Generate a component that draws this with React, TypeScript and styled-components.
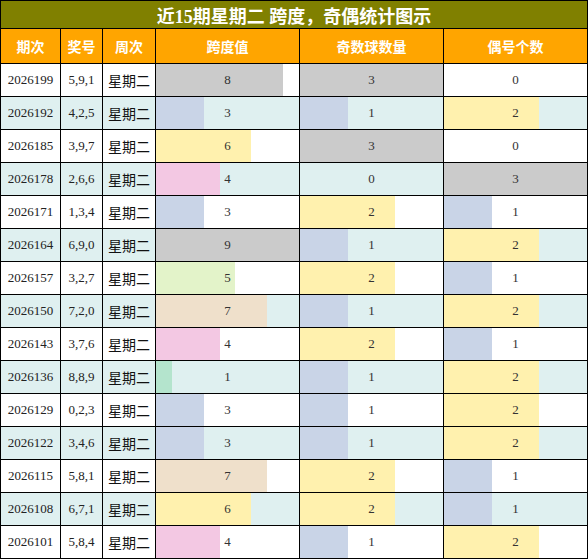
import React from 'react';
import styled, { createGlobalStyle } from 'styled-components';

type Draw = { issue: string; balls: string; span: number; odd: number; even: number };

const draws: Draw[] = [
  { issue: '2026199', balls: '5,9,1', span: 8, odd: 3, even: 0 },
  { issue: '2026192', balls: '4,2,5', span: 3, odd: 1, even: 2 },
  { issue: '2026185', balls: '3,9,7', span: 6, odd: 3, even: 0 },
  { issue: '2026178', balls: '2,6,6', span: 4, odd: 0, even: 3 },
  { issue: '2026171', balls: '1,3,4', span: 3, odd: 2, even: 1 },
  { issue: '2026164', balls: '6,9,0', span: 9, odd: 1, even: 2 },
  { issue: '2026157', balls: '3,2,7', span: 5, odd: 2, even: 1 },
  { issue: '2026150', balls: '7,2,0', span: 7, odd: 1, even: 2 },
  { issue: '2026143', balls: '3,7,6', span: 4, odd: 2, even: 1 },
  { issue: '2026136', balls: '8,8,9', span: 1, odd: 1, even: 2 },
  { issue: '2026129', balls: '0,2,3', span: 3, odd: 1, even: 2 },
  { issue: '2026122', balls: '3,4,6', span: 3, odd: 1, even: 2 },
  { issue: '2026115', balls: '5,8,1', span: 7, odd: 2, even: 1 },
  { issue: '2026108', balls: '6,7,1', span: 6, odd: 2, even: 1 },
  { issue: '2026101', balls: '5,8,4', span: 4, odd: 1, even: 2 },
];

const spanColors: Record<number, string> = {
  1: '#b4e4cd',
  2: '#c9d4e7',
  3: '#c9d4e7',
  4: '#f3c8e3',
  5: '#e3f3c9',
  6: '#fff1ae',
  7: '#efe0cb',
  8: '#cbcbcb',
  9: '#cbcbcb',
};

const countColors: Record<number, string> = {
  1: '#c9d4e7',
  2: '#fff1ae',
  3: '#cbcbcb',
};

const GlobalStyle = createGlobalStyle`
  body {
    margin: 0;
    background: #fff;
  }
`;

function App() {
  return (
    <>
      <GlobalStyle />
      <Table>
        <Title>近15期星期二 跨度，奇偶统计图示</Title>
        {['期次', '奖号', '周次', '跨度值', '奇数球数量', '偶号个数'].map((h) => (
          <HeadCell key={h}>{h}</HeadCell>
        ))}
        {draws.map((d, i) => {
          const striped = i % 2 === 1;
          return (
            <React.Fragment key={d.issue}>
              <Cell $striped={striped}>{d.issue}</Cell>
              <Cell $striped={striped}>{d.balls}</Cell>
              <WeekCell $striped={striped}>星期二</WeekCell>
              <BarCell $striped={striped} $fill={spanColors[d.span] ?? 'transparent'} $pct={(d.span / 9) * 100}>
                {d.span}
              </BarCell>
              <BarCell $striped={striped} $fill={countColors[d.odd] ?? 'transparent'} $pct={(d.odd / 3) * 100}>
                {d.odd}
              </BarCell>
              <BarCell $striped={striped} $fill={countColors[d.even] ?? 'transparent'} $pct={(d.even / 3) * 100}>
                {d.even}
              </BarCell>
            </React.Fragment>
          );
        })}
      </Table>
    </>
  );
}

const Table = styled.div`
  width: 588px;
  box-sizing: border-box;
  display: grid;
  grid-template-columns: 59px 41px 52px 143px 143px 143px;
  grid-template-rows: 27px 34px repeat(15, 32px);
  gap: 1px;
  padding: 1px;
  background: #000;
  font-family: 'Liberation Serif', 'Noto Sans CJK SC', serif;
`;

const Title = styled.div`
  grid-column: 1 / -1;
  display: flex;
  align-items: center;
  justify-content: center;
  background: #808000;
  color: #fff;
  font-size: 18px;
  font-weight: bold;
`;

const HeadCell = styled.div`
  display: flex;
  align-items: center;
  justify-content: center;
  background: #ffa500;
  color: #fff;
  font-family: 'Noto Sans CJK SC', sans-serif;
  font-size: 14px;
  font-weight: bold;
`;

const Cell = styled.div<{ $striped: boolean }>`
  display: flex;
  align-items: center;
  justify-content: center;
  background: ${(p) => (p.$striped ? '#dff0f0' : '#fff')};
  color: #222;
  font-size: 13px;
`;

const WeekCell = styled(Cell)`
  font-family: 'Noto Sans CJK SC', sans-serif;
  font-size: 14px;
  color: #111;
`;

const BarCell = styled(Cell)<{ $fill: string; $pct: number }>`
  color: #333;
  background:
    linear-gradient(
      to right,
      ${(p) => p.$fill} ${(p) => p.$pct}%,
      transparent ${(p) => p.$pct}%
    ),
    ${(p) => (p.$striped ? '#dff0f0' : '#fff')};
`;

export default App;
